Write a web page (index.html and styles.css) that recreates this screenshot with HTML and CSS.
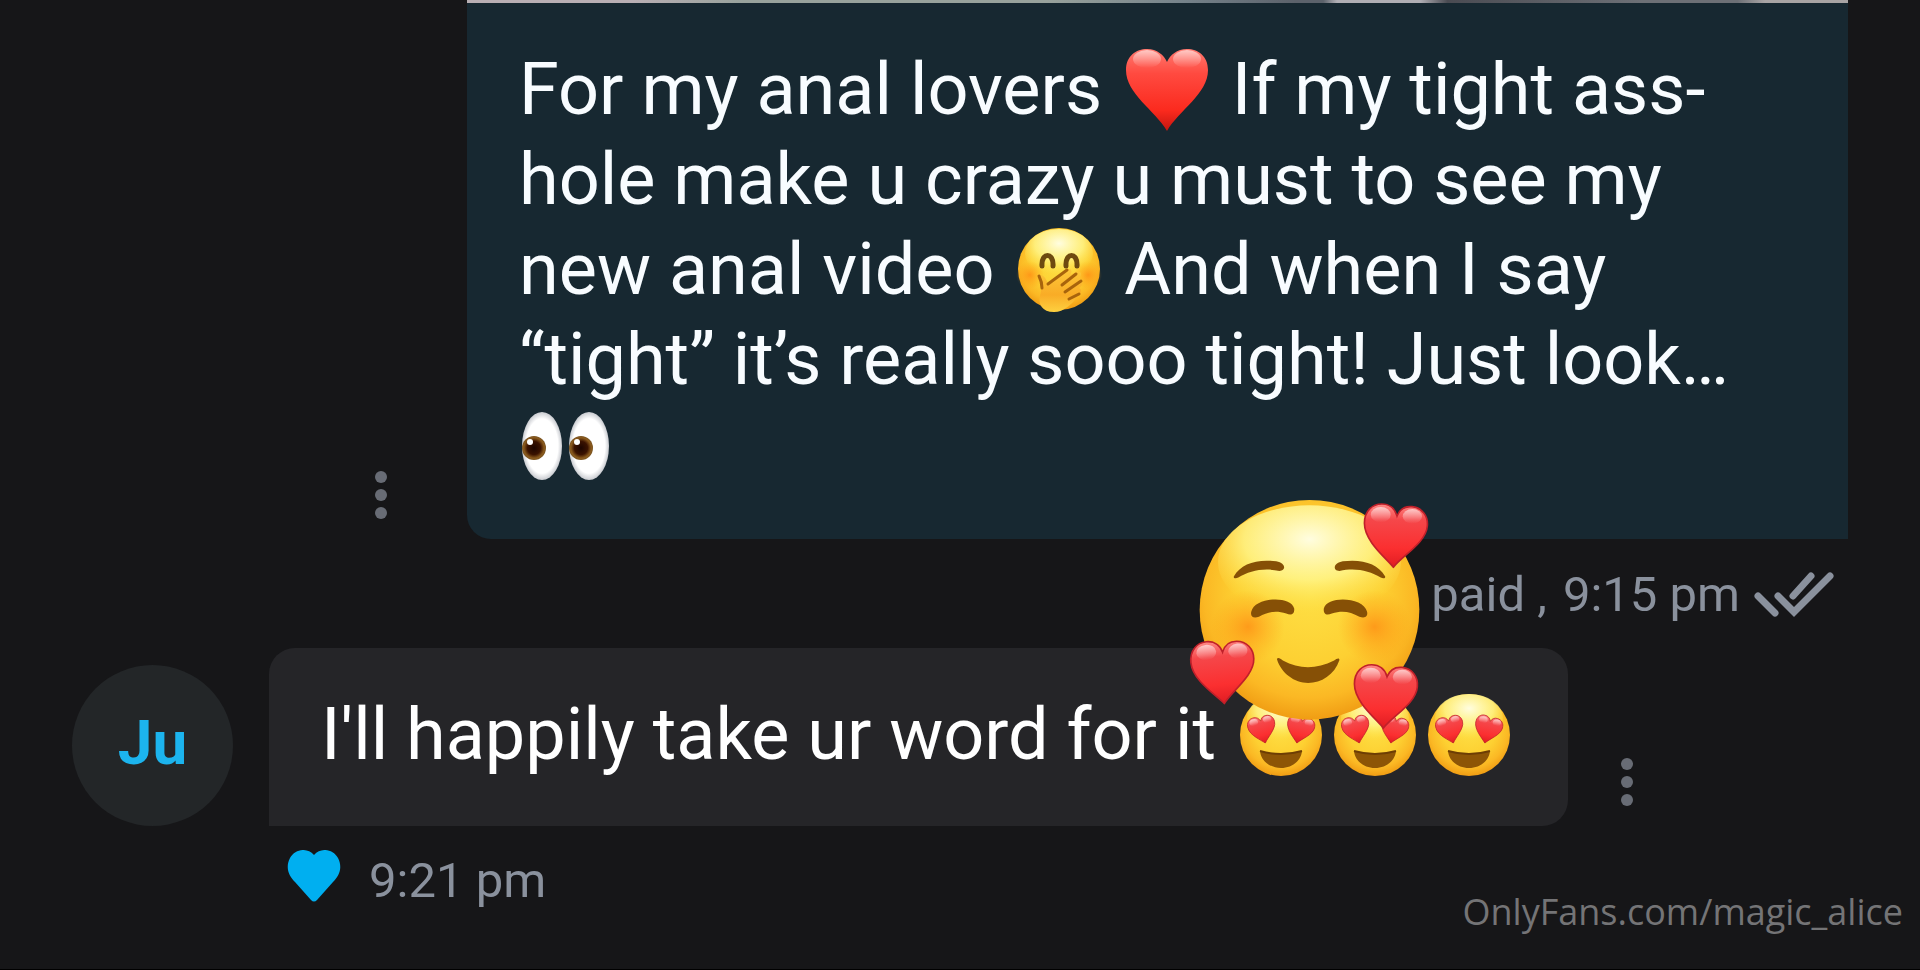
FILE: index.html
```
<!DOCTYPE html>
<html lang="en">
  <head>
    <title>Chat</title>
    <meta charset="UTF-8">
    <meta name="viewport" content="width=device-width, initial-scale=1.0">
    <link rel="stylesheet" href="styles.css">
  </head>
  <body>
    <!-- shared gradients and shapes for the emoji -->
    <svg class="defs" width="0" height="0" aria-hidden="true">
      <defs>
        <radialGradient id="face" cx="0.5" cy="0.42" r="0.6">
          <stop offset="0" stop-color="#fee045"/>
          <stop offset="0.55" stop-color="#fdd032"/>
          <stop offset="0.8" stop-color="#fbb824"/>
          <stop offset="1" stop-color="#ee9710"/>
        </radialGradient>
        <radialGradient id="shine" cx="0.5" cy="0.3" r="0.65">
          <stop offset="0" stop-color="#fffde0"/>
          <stop offset="0.55" stop-color="#fff68c" stop-opacity="0.8"/>
          <stop offset="1" stop-color="#fee34a" stop-opacity="0"/>
        </radialGradient>
        <radialGradient id="blush">
          <stop offset="0" stop-color="#ff8410" stop-opacity="0.7"/>
          <stop offset="1" stop-color="#ff9a10" stop-opacity="0"/>
        </radialGradient>
        <linearGradient id="red" x1="0" y1="0" x2="0" y2="1">
          <stop offset="0" stop-color="#ff8a86"/>
          <stop offset="0.25" stop-color="#f5474a"/>
          <stop offset="0.7" stop-color="#fb2f30"/>
          <stop offset="1" stop-color="#e01c22"/>
        </linearGradient>
        <linearGradient id="bigred" x1="0" y1="0" x2="0" y2="1">
          <stop offset="0" stop-color="#ff7a70"/>
          <stop offset="0.3" stop-color="#ff4a40"/>
          <stop offset="0.75" stop-color="#fb2a1e"/>
          <stop offset="1" stop-color="#c4160f"/>
        </linearGradient>
        <linearGradient id="gloss" x1="0" y1="0" x2="0" y2="1">
          <stop offset="0" stop-color="#fff" stop-opacity="0.6"/>
          <stop offset="1" stop-color="#fff" stop-opacity="0"/>
        </linearGradient>
        <linearGradient id="hand" x1="0" y1="0" x2="0" y2="1">
          <stop offset="0" stop-color="#fdc83a"/>
          <stop offset="0.6" stop-color="#f9ac26"/>
          <stop offset="1" stop-color="#fdd040"/>
        </linearGradient>
        <radialGradient id="eyeball">
          <stop offset="0.8" stop-color="#fff"/>
          <stop offset="1" stop-color="#c9cbd0"/>
        </radialGradient>
        <radialGradient id="iris">
          <stop offset="0" stop-color="#1c0500"/>
          <stop offset="0.55" stop-color="#3a1200"/>
          <stop offset="0.85" stop-color="#8a5a1c"/>
          <stop offset="1" stop-color="#7a5524"/>
        </radialGradient>
        <symbol id="smallheart" viewBox="0 0 200 200">
          <path d="M92 196C70 168 5 118 5 64C5 26 30 6 57 6C80 6 97 20 103 42C112 20 128 12 148 14C178 17 197 42 194 72C190 122 120 160 92 196Z" fill="url(#red)" stroke="#c0202a" stroke-width="5"/>
          <ellipse cx="54" cy="38" rx="30" ry="23" fill="url(#gloss)"/>
          <ellipse cx="149" cy="43" rx="29" ry="22" fill="url(#gloss)"/>
        </symbol>
        <symbol id="hearteyes" viewBox="0 0 94 84">
          <circle cx="47" cy="42" r="41" fill="url(#face)"/>
          <ellipse cx="47" cy="25" rx="34" ry="24" fill="url(#shine)"/>
          <use href="#smallheart" x="14" y="22" width="29" height="29" transform="rotate(-16 28 36)"/>
          <use href="#smallheart" x="52" y="22" width="29" height="29" transform="rotate(10 66 36)"/>
          <path d="M26 58Q47 64 68 58C67 68 58 75 47 75C36 75 27 68 26 58Z" fill="#8d5506"/>
          <path d="M26 58Q47 64 68 58" fill="none" stroke="#6e3e04" stroke-width="2"/>
        </symbol>
      </defs>
    </svg>

    <main class="chat">
      <section class="message sent">
        <div class="row">
          <button class="more" type="button" aria-label="Message options"><span></span><span></span><span></span></button>
          <div class="bubble">
            <div class="photo"></div>
            <p>For my anal lovers <svg class="emoji" viewBox="0 0 94 84" role="img" aria-label="red heart">
                <path d="M47 83C35 62 6 46 6 22C6 8 16 1 27 1C37 1 44 7 47 14C50 7 57 1 67 1C78 1 88 8 88 22C88 46 59 62 47 83Z" fill="url(#bigred)"/>
                <ellipse cx="27" cy="11" rx="14" ry="9" fill="url(#gloss)"/>
                <ellipse cx="67" cy="11" rx="14" ry="9" fill="url(#gloss)"/>
              </svg> If my tight ass-<br>hole make u crazy u must to see my<br>new anal video <svg class="emoji" viewBox="0 0 94 84" role="img" aria-label="face with hand over mouth">
                <circle cx="47" cy="41" r="41" fill="url(#face)"/>
                <ellipse cx="47" cy="25" rx="34" ry="24" fill="url(#shine)"/>
                <circle cx="18" cy="47" r="14" fill="url(#blush)"/>
                <circle cx="76" cy="47" r="14" fill="url(#blush)"/>
                <path d="M30 38C29 24 42 24 41 38M54 38C53 24 66 24 65 38" fill="none" stroke="#6e4a10" stroke-width="5" stroke-linecap="round"/>
                <path d="M27 49C30 44 34 50 36 56L53 43C58 39 62 42 58 47L64 44C69 42 71 47 67 50L69 52C72 55 70 58 67 60C71 62 69 66 66 68C60 76 52 84 42 84C30 84 26 76 28 68C30 61 29 55 27 49Z" fill="url(#hand)"/>
                <path d="M27 48C29 52 30 56 30 60M36 56L55 42M50 57L64 46M53 64L69 53M57 71L67 66" fill="none" stroke="#a8640c" stroke-width="3" stroke-linecap="round"/>
              </svg> And when I say<br>“tight” it’s really sooo tight! Just look…<br><svg class="emoji" viewBox="0 0 94 84" role="img" aria-label="eyes">
                <ellipse cx="23" cy="38" rx="20" ry="34" fill="url(#eyeball)"/>
                <ellipse cx="70" cy="38" rx="20" ry="34" fill="url(#eyeball)"/>
                <circle cx="15" cy="40" r="12" fill="url(#iris)"/>
                <circle cx="62" cy="40" r="12" fill="url(#iris)"/>
                <circle cx="11" cy="34" r="3" fill="#fff"/>
                <circle cx="58" cy="34" r="3" fill="#fff"/>
              </svg></p>
          </div>
        </div>
        <div class="meta">
          <span>paid ,</span>
          <time>9:15 pm</time>
          <svg class="checks" viewBox="0 0 80 48" role="img" aria-label="Read">
            <path d="M4 25L21 42M24 25L40 41L76 5M39 25L57 5" fill="none" stroke="currentColor" stroke-width="7" stroke-linecap="round"/>
          </svg>
        </div>
        <!-- sticker lies over both messages -->
        <svg class="sticker" viewBox="50 50 740 700" role="img" aria-label="smiling face with hearts">
          <circle cx="420" cy="389" r="330" fill="url(#face)"/>
          <ellipse cx="420" cy="245" rx="275" ry="170" fill="url(#shine)"/>
          <circle cx="235" cy="440" r="110" fill="url(#blush)"/>
          <circle cx="615" cy="440" r="110" fill="url(#blush)"/>
          <g fill="#865006">
            <path d="M193 288C215 250 260 236 320 243C350 248 350 272 330 272C280 262 240 272 206 292C198 296 190 294 193 288Z"/>
            <path d="M647 288C625 250 580 236 520 243C490 248 490 272 510 272C560 262 600 272 634 292C642 296 650 294 647 288Z"/>
            <path d="M245 395C255 350 365 345 374 385C376 404 364 406 350 400C320 390 295 394 268 410C250 416 242 408 245 395Z"/>
            <path d="M593 395C583 350 473 345 463 385C461 404 473 406 487 400C518 390 543 394 570 410C588 416 596 408 593 395Z"/>
            <path d="M322 537C325 530 332 535 340 541C390 568 440 568 494 541C502 535 510 532 510 540C495 585 455 609 416 609C375 609 335 580 322 537Z"/>
          </g>
          <use href="#smallheart" x="580" y="65" width="200" height="200"/>
          <use href="#smallheart" x="62" y="474" width="200" height="200" transform="rotate(-6 162 574)"/>
          <use href="#smallheart" x="550" y="548" width="200" height="200"/>
        </svg>
      </section>

      <section class="message received">
        <div class="row">
          <div class="avatar">Ju</div>
          <div class="bubble">
            <p>I'll happily take ur word for it <svg class="emoji" role="img" aria-label="heart eyes"><use href="#hearteyes"/></svg><svg class="emoji" role="img" aria-label="heart eyes"><use href="#hearteyes"/></svg><svg class="emoji" role="img" aria-label="heart eyes"><use href="#hearteyes"/></svg></p>
          </div>
          <button class="more" type="button" aria-label="Message options"><span></span><span></span><span></span></button>
        </div>
        <div class="meta">
          <button class="like" type="button" aria-label="Like">
            <svg viewBox="0 0 54 52" aria-hidden="true"><path d="M27 5C34 -3 46 -1 51 8C56 18 52 26 46 32L30 50Q27 53 24 50L8 32C2 26 -2 18 3 8C8 -1 20 -3 27 5Z" fill="#00aff0"/></svg>
          </button>
          <time>9:21 pm</time>
        </div>
      </section>
    </main>
    <footer>OnlyFans.com/magic_alice</footer>
  </body>
</html>
```
FILE: styles.css
```
*{
  box-sizing: border-box;
}

body{
  position: relative;
  margin: 0;
  min-height: 100vh;
  background: #161618;
  border-bottom: 1px solid #000;
  color: #f8fcff;
  font-family: Roboto, sans-serif;
}

p{
  margin: 0;
}

button{
  padding: 0;
  border: 0;
  background: none;
  cursor: pointer;
}

.defs{
  position: absolute;
}

.message{
  position: relative;
}

.row{
  display: flex;
  align-items: flex-end;
}

.sent{
  padding-right: 72px;
}

.sent .row{
  justify-content: flex-end;
}

.bubble{
  font-size: 72px;
  line-height: 90px;
}

.bubble p{
  padding: 42px 52px 44px;
  white-space: nowrap;
}

.sent .bubble{
  width: calc(75% - 5px);
  background: #172831;
  border-radius: 0 0 0 24px;
}

.photo{
  height: 3px;
  background: linear-gradient(to right, #b9afb4 0 12%, #98a29c 20% 42%, #75828a 52%, #5c626b 60% 62%, #b0aeb4 63% 69%, #4a4b52 71%, #6d7076 85% 92%, #a8a4a4 94%);
}

.received{
  padding-left: 72px;
}

.received .bubble{
  margin-left: 36px;
  background: #252528;
  color: #fff;
  border-radius: 26px 26px 26px 0;
}

.received .bubble p{
  padding-bottom: 46px;
}

.emoji{
  width: 94px;
  height: 84px;
  vertical-align: -18px;
}

.more{
  display: flex;
  flex-direction: column;
  align-items: center;
  gap: 6px;
  width: 36px;
  margin-bottom: 20px;
}

.more span{
  width: 12px;
  height: 12px;
  border-radius: 50%;
  background: #686c75;
}

.sent .more{
  margin-right: 68px;
}

.received .more{
  margin-left: 41px;
}

.meta{
  display: flex;
  align-items: center;
  color: #8a919d;
  font-size: 49px;
  line-height: 56px;
}

.sent .meta{
  justify-content: flex-end;
  padding: 28px 14px 25px 0;
}

.sent .meta time{
  margin-left: 16px;
}

.checks{
  width: 80px;
  height: 48px;
  margin-left: 14px;
}

.sticker{
  position: absolute;
  top: 497px;
  right: 487px;
  width: 247px;
  height: 233px;
  z-index: 1;
}

.avatar{
  width: 161px;
  height: 161px;
  border-radius: 50%;
  background: #232628;
  color: #1cb4ee;
  font-size: 62px;
  font-weight: bold;
  line-height: 156px;
  text-align: center;
}

.received .meta{
  padding: 24px 0 0 215px;
}

.like{
  width: 54px;
  height: 62px;
  margin-right: 28px;
}

.like svg{
  display: block;
  height: 52px;
  margin-bottom: 10px;
}

/* watermark over the chat */
footer{
  position: absolute;
  right: 17px;
  bottom: 33px;
  color: #747476;
  font-family: "Open Sans", sans-serif;
  font-size: 36px;
  line-height: 48px;
}
```
